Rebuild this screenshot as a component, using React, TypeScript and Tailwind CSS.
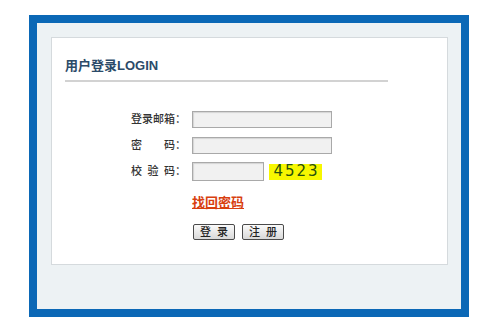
import React from 'react';

const cjk = { fontFamily: '"Liberation Sans", "Noto Sans CJK SC", sans-serif' };

// label chars spread over a fixed width, then the colon
const Label = ({ chars }: { chars: string[] }) => (
  <div className="flex w-[61px] shrink-0 items-center text-[11px] font-medium text-[#333]">
    <div className="flex w-[44px] justify-between">
      {chars.map((c, i) => (
        <span key={i}>{c}</span>
      ))}
    </div>
    <span>：</span>
  </div>
);

const Field = ({ w, h = 'h-[17px]' }: { w: string; h?: string }) => (
  <div className={`${w} ${h} border border-[#a9a9a9] bg-[#f1f1f1] shadow-[inset_1px_1px_1px_rgba(0,0,0,0.12)]`} />
);

const Btn = ({ text }: { text: string }) => (
  <button className="flex h-[16px] w-[42px] items-center justify-center gap-[6px] rounded-[2px] border border-[#4a4a4a] bg-gradient-to-b from-[#fafafa] to-[#d9d9d9] text-[11px] font-medium leading-none text-[#222]">
    {text.split('').map((c, i) => (
      <span key={i}>{c}</span>
    ))}
  </button>
);

export default function App() {
  return (
    <div className="h-[327px] w-[500px] bg-white pl-[29px] pt-[15px]" style={cjk}>
      <div className="h-[302px] w-[440px] border-8 border-[#0b68b6] bg-[#edf2f4] pl-[14px] pr-[13px] pt-[14px]">
        <div className="h-[228px] w-[397px] border border-[#d5dadd] bg-white px-[13px] pt-[20px]">
          <div className="h-[16px] text-[13px] font-bold leading-[16px] text-[#2c4b69]">用户登录LOGIN</div>
          <div className="mt-[6px] h-[2px] w-[323px] bg-[#d2d2d2]" />

          <div className="mt-[29px] flex flex-col pl-[66px]">
            <div className="flex h-[17px] items-center">
              <Label chars={['登', '录', '邮', '箱']} />
              <Field w="w-[140px]" />
            </div>
            <div className="mt-[9px] flex h-[17px] items-center">
              <Label chars={['密', '码']} />
              <Field w="w-[140px]" />
            </div>
            <div className="mt-[8px] flex h-[19px] items-center">
              <Label chars={['校', '验', '码']} />
              <Field w="w-[72px]" h="h-[19px]" />
              <div
                className="ml-[5px] flex h-[16px] w-[53px] items-center justify-center bg-[#f7f700] pl-[2px] text-[15px] leading-none tracking-[2px] text-[#27500c]"
                style={{ fontFamily: '"DejaVu Sans", sans-serif' }}
              >
                4523
              </div>
            </div>
          </div>

          <div className="mt-[9px] pl-[127px]">
            <a href="#" className="text-[13px] font-bold leading-[14px] text-[#d8400f] underline">
              找回密码
            </a>
          </div>
          <div className="mt-[10px] flex gap-[7px] pl-[128px]">
            <Btn text="登录" />
            <Btn text="注册" />
          </div>
        </div>
      </div>
    </div>
  );
}
